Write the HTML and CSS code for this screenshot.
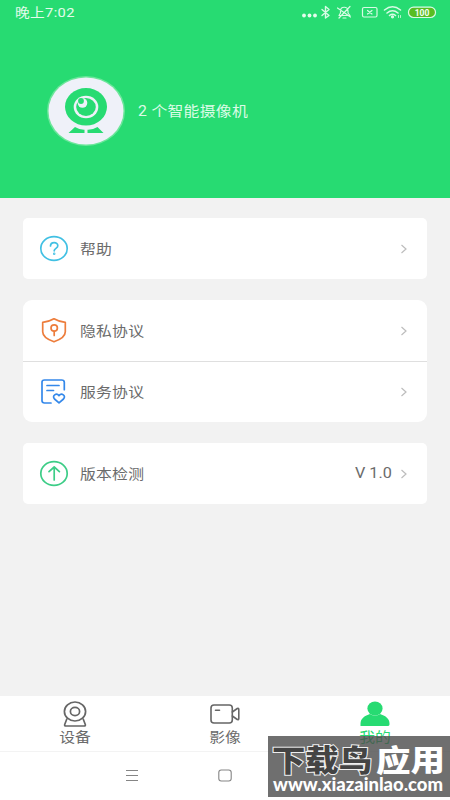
FILE: index.html
```html
<!DOCTYPE html>
<html lang="zh-CN">
<head>
<meta charset="utf-8">
<title>我的</title>
<link rel="stylesheet" href="styles.css">
</head>
<body>
<div class="screen">
  <header class="hero">
    <div class="status">
      <span class="time wide">晚上7:02</span>
      <svg class="status-icons" width="140" height="26" viewBox="0 0 140 26" fill="none" stroke="#d8fbe5" stroke-width="1.200" stroke-linecap="round" stroke-linejoin="round">
        <g fill="#e4fcec" stroke="none"><circle cx="6" cy="15.500" r="1.900"/><circle cx="11.500" cy="15.500" r="1.900"/><circle cx="17" cy="15.500" r="1.900"/></g>
        <path d="M24 9.500l7 6-3.500 2.500V6.500l3.500 3-7 6" stroke-width="1.400"/>
        <path d="M41 15.500h11l-2-2.500v-2c0-5-7.500-5-7.500 0v2zM45 18h3M39.500 8l13 9M52 6.500L41 18"/>
        <rect x="64.500" y="7.500" width="14.500" height="9.500" rx="1.500"/><path d="M69.500 10.500l4.500 3.500m0-3.500L69.500 14"/>
        <path d="M86.500 10q8-6.500 16 0M89 13q5.500-4.500 11 0M91.500 15.500q3-2.500 6 0" stroke-width="1.600"/><circle cx="94.500" cy="16.800" r="1" fill="#d8fbe5"/><path d="M100.500 15.500v2m2-2v2" stroke-width=".8"/>
        <rect x="110.500" y="7.200" width="27" height="10.300" rx="5.100" fill="#58bd22"/>
        <text x="124" y="15.900" text-anchor="middle" class="battery">100</text>
      </svg>
    </div>
    <div class="profile">
      <svg class="avatar" width="80" height="72" viewBox="0 0 80 72">
        <ellipse cx="40" cy="36" rx="39" ry="35" fill="#6be69a"/>
        <ellipse cx="40" cy="36" rx="37.500" ry="33.500" fill="#eff1f9"/>
        <ellipse cx="40" cy="31.800" rx="21" ry="18.800" fill="#27db72"/>
        <ellipse cx="40" cy="32" rx="12.300" ry="11.300" fill="#eff1f9"/>
        <ellipse cx="40" cy="32" rx="9.800" ry="8.900" fill="#27db72"/>
        <circle cx="36.500" cy="28" r="4.800" fill="#eff1f9"/><circle cx="35" cy="26" r="2.900" fill="#27db72"/>
        <path d="M29 52q5 3 9.500 2.800V58h-16zM41.500 54.800q5 .2 10-2.800l6 6h-16z" fill="#27db72"/>
      </svg>
      <span class="count wide">2 个智能摄像机</span>
    </div>
  </header>
  <main class="content">
    <section class="card">
      <div class="row">
        <svg class="icon" width="30" height="30" viewBox="0 0 30 30" fill="none" stroke="#41c0e3" stroke-width="1.700" stroke-linecap="round"><ellipse cx="15" cy="14.500" rx="13.200" ry="11.900"/><path d="M11.500 12c0-4.500 7.300-4.500 7.300-.2 0 2.700-3.600 2.500-3.600 5"/><circle cx="15.200" cy="19.800" r=".4" fill="#41c0e3"/></svg>
        <span class="label wide">帮助</span>
        <svg class="arrow" width="8" height="10" viewBox="0 0 8 10"><path d="M1.500 1l4.500 4-4.500 4"/></svg>
      </div>
    </section>
    <section class="card group">
      <div class="row">
        <svg class="icon" width="30" height="30" viewBox="0 0 30 30" fill="none" stroke="#ed7d3c" stroke-width="1.700" stroke-linejoin="round" stroke-linecap="round"><path d="M15 2.800q5 3 11.300 3.500v9.500c0 5-5.500 8-11.300 10-5.800-2-11.300-5-11.300-10V6.300q6.300-.5 11.300-3.500z"/><circle cx="15.200" cy="12" r="3.200"/><path d="M15.200 15.500v4"/></svg>
        <span class="label wide">隐私协议</span>
        <svg class="arrow" width="8" height="10" viewBox="0 0 8 10"><path d="M1.500 1l4.500 4-4.500 4"/></svg>
      </div>
      <div class="row">
        <svg class="icon" width="30" height="30" viewBox="0 0 30 30" fill="none" stroke="#3488ea" stroke-width="1.700" stroke-linejoin="round" stroke-linecap="round"><path d="M12 26H5.500Q3 26 3 23.700V5.100Q3 3 5.500 3h17q2.800 0 2.800 2.300v7.400M8 8.500h12M8 13.500h6.500M20 25.800l-4.500-3.800c-3-3.500 2-6.500 4.500-3.300 2.500-3.200 7.500-.2 4.500 3.300z"/></svg>
        <span class="label wide">服务协议</span>
        <svg class="arrow" width="8" height="10" viewBox="0 0 8 10"><path d="M1.500 1l4.500 4-4.500 4"/></svg>
      </div>
    </section>
    <section class="card">
      <div class="row">
        <svg class="icon" width="30" height="30" viewBox="0 0 30 30" fill="none" stroke="#3dcd87" stroke-width="1.700" stroke-linecap="round" stroke-linejoin="round"><ellipse cx="15" cy="14.500" rx="13.200" ry="11.900"/><path d="M15.200 21v-13M10 12.700L15.200 8l5.200 4.700"/></svg>
        <span class="label wide">版本检测</span>
        <span class="version wide">V 1.0</span>
        <svg class="arrow" width="8" height="10" viewBox="0 0 8 10"><path d="M1.500 1l4.500 4-4.500 4"/></svg>
      </div>
    </section>
  </main>
  <nav class="tabs">
    <div class="tab">
      <svg width="30" height="28" viewBox="0 0 30 28" fill="none" stroke="#666" stroke-width="1.700" stroke-linejoin="round"><ellipse cx="15" cy="11.500" rx="10.600" ry="9.500"/><ellipse cx="15" cy="11.500" rx="4.600" ry="4.100"/><path d="M7 18.500l-2.300 6q-.5 1.500 1.300 1.500h18q1.800 0 1.300-1.500l-2.300-6"/></svg>
      <span class="wide">设备</span>
    </div>
    <div class="tab">
      <svg width="30" height="28" viewBox="0 0 30 28" fill="none" stroke="#666" stroke-width="1.600" stroke-linejoin="round" stroke-linecap="round"><rect x="1" y="5" width="21.300" height="18" rx="3"/><path d="M5.500 10.200h4M22.300 12l5-3.500q1.500-.5 1.500 1v9q0 1.500-1.500 1l-5-3.500"/></svg>
      <span class="wide">影像</span>
    </div>
    <div class="tab active">
      <svg width="30" height="28" viewBox="0 0 30 28" fill="#27db72"><ellipse cx="15" cy="8.500" rx="7.600" ry="6.900"/><path d="M.5 26v-2.500C.5 18.500 5 15.500 10 14q5 3 10 0c5 1.500 9.500 4.500 9.500 9.500v1q0 1.500-2 1.500z"/></svg>
      <span class="wide">我的</span>
    </div>
  </nav>
  <footer class="system">
    <svg width="450" height="48" viewBox="0 0 450 48" fill="none" stroke="#858585" stroke-width="1.100"><path d="M126 18.500h12M126 23.500h12M126 28.500h12"/><rect x="218.800" y="18" width="12.400" height="11" rx="2.500"/></svg>
  </footer>
  <div class="watermark">
    <svg width="182" height="61" viewBox="0 0 182 61">
      <text x="4" y="35" textLength="100" lengthAdjust="spacingAndGlyphs" class="brand outline">下载鸟</text>
      <text x="108" y="35" textLength="69" lengthAdjust="spacingAndGlyphs" class="brand solid">应用</text>
      <text x="5" y="55" textLength="170" lengthAdjust="spacingAndGlyphs" class="site">www.xiazainlao.com</text>
    </svg>
  </div>
</div>
</body>
</html>
```
FILE: styles.css
```css
* { box-sizing: border-box; }
body { margin: 0; background: #f2f2f2; font-family: Roboto, "Noto Sans CJK SC", sans-serif; color: #6b6b6b; }
svg { display: block; flex: none; }
.screen { position: relative; width: 450px; height: 800px; display: flex; flex-direction: column; overflow: hidden; }
.wide { display: inline-block; transform: scaleX(1.13); transform-origin: left center; white-space: nowrap; }
.hero { height: 198px; flex: none; background: #27db72; color: #dcfbe7; }
.status { height: 26px; display: flex; justify-content: space-between; padding: 0 12px 0 15px; }
.time { font-size: 13px; line-height: 26px; letter-spacing: .3px; color: #e4fcec; }
.status-icons { margin-right: 0; }
.battery { font: bold 8.5px Roboto, sans-serif; fill: #f5fff4; stroke: none; }
.profile { display: flex; align-items: center; gap: 12px; padding: 49px 0 0 46px; }
.count { font-size: 14px; line-height: 20px; letter-spacing: .25px; }
.content { flex: 1; display: flex; flex-direction: column; gap: 21px; padding: 20px 23px 0; }
.card { background: #fff; border-radius: 5px; }
.group { border-radius: 9px; }
.row { height: 61px; display: flex; align-items: center; padding: 0 19px 0 16px; }
.row + .row { border-top: 1px solid #dfdfdf; }
.icon { margin-right: 11px; }
.label { font-size: 14px; line-height: 20px; letter-spacing: .2px; }
.version { margin-left: auto; margin-right: 12px; font-size: 14.5px; line-height: 20px; padding-top: 1px; transform: scaleX(1.12); }
.arrow { margin-left: auto; fill: none; stroke: #bdbdbd; stroke-width: 1.2; }
.version + .arrow { margin-left: 0; }
.tabs { height: 56px; flex: none; display: grid; grid-template-columns: repeat(3, 1fr); background: #fff; border-bottom: 1px solid #f3f3f3; }
.tab { display: flex; flex-direction: column; align-items: center; padding-top: 4px; font-size: 14px; line-height: 18px; }
.tab .wide { transform-origin: center; }
.tab.active { color: #27db72; }
.system { height: 48px; flex: none; background: #fff; }
.watermark { position: absolute; left: 268px; top: 736px; width: 182px; height: 61px; background: rgba(75, 75, 75, .8); }
.brand { font: 900 29.5px "Noto Sans CJK SC", sans-serif; }
.outline { fill: #444; stroke: #eee; stroke-width: 2px; paint-order: stroke; }
.solid { fill: #fff; }
.site { font: 900 18px Lato, sans-serif; fill: #fff; }
```
